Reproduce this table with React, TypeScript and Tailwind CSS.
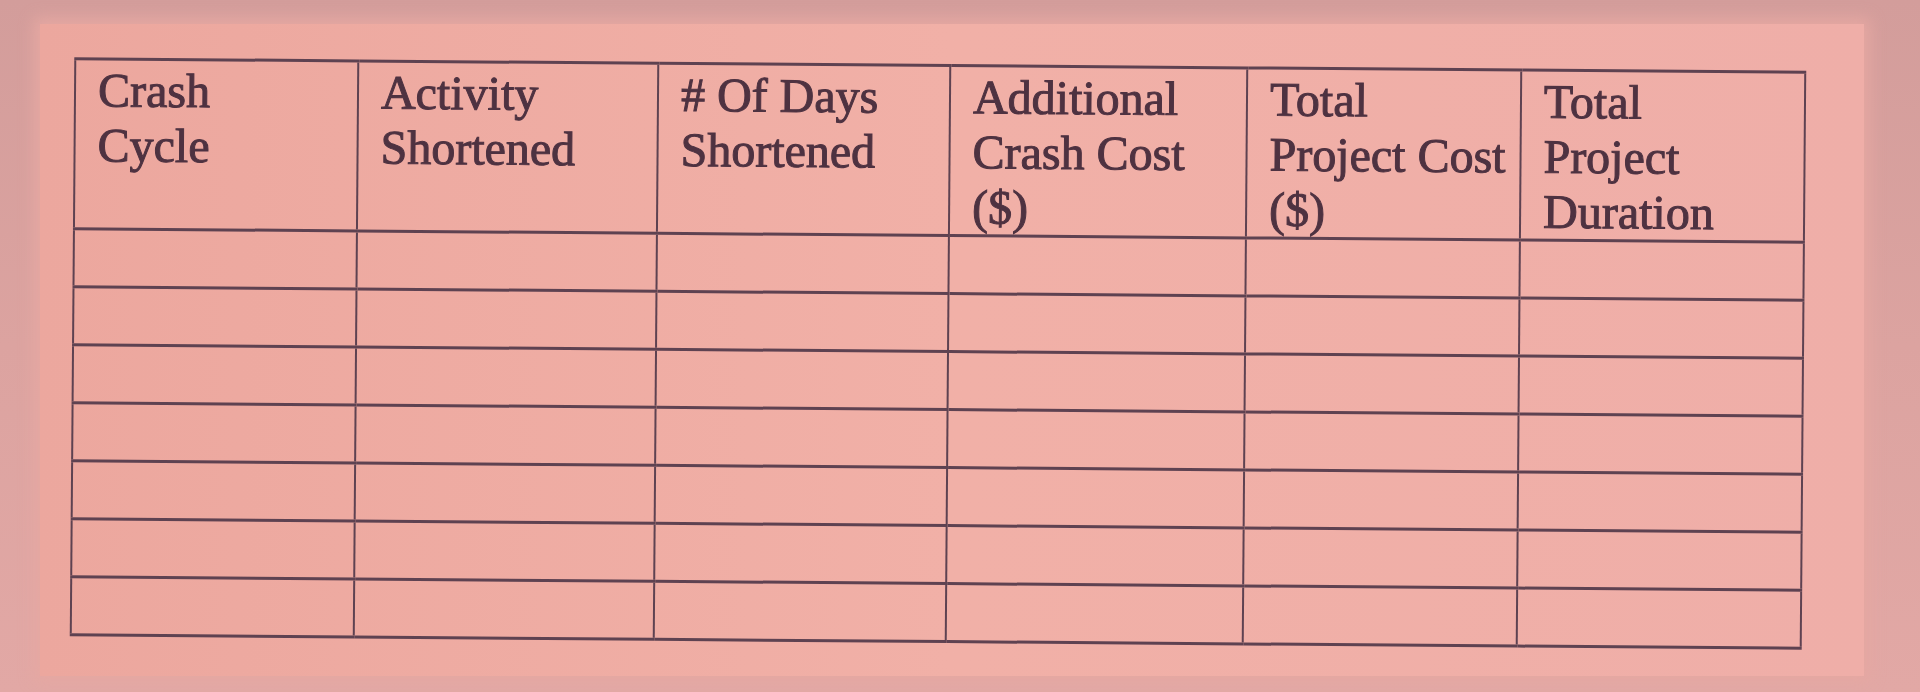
import React from "react";

const headers: string[][] = [
  ["Crash", "Cycle"],
  ["Activity", "Shortened"],
  ["# Of Days", "Shortened"],
  ["Additional", "Crash Cost", "($)"],
  ["Total", "Project Cost", "($)"],
  ["Total", "Project", "Duration"],
];

const widths = ["w-[283px]", "w-[300px]", "w-[292px]", "w-[297px]", "w-[274px]", "w-[284px]"];

export default function App() {
  const rows = Array.from({ length: 7 });
  return (
    <div className="w-full h-[692px] bg-gradient-to-b from-[#d39d9b] via-[#dca3a0] to-[#e2a8a5] pt-[24px] pl-[40px] overflow-hidden">
      <div className="w-[1824px] h-[652px] bg-gradient-to-r from-[#eca79e] via-[#f1b0a7] to-[#efaea8] shadow-[0_0_14px_6px_#e6a8a2]  pt-[40px] pl-[32px]">
        <table
          className="table-fixed border-collapse rotate-[0.45deg] text-[#4e3241] [-webkit-text-stroke:1px_#4e3241]"
          style={{ fontFamily: '"Liberation Serif", "Times New Roman", serif' }}
        >
          <colgroup>
            {widths.map((w, i) => (
              <col key={i} className={w} />
            ))}
          </colgroup>
          <thead>
            <tr className="h-[166px]">
              {headers.map((lines, i) => (
                <th
                  key={i}
                  className="align-top text-left font-normal text-[48px] leading-[55px] pl-[22px] pt-[2px] border-y-[3px] border-x-2 border-[#5e4251]"
                >
                  {lines.map((l, j) => (
                    <div key={j} className="whitespace-nowrap">
                      {l}
                    </div>
                  ))}
                </th>
              ))}
            </tr>
          </thead>
          <tbody>
            {rows.map((_, r) => (
              <tr key={r} className="h-[58px]">
                {headers.map((_, c) => (
                  <td key={c} className="border-y-[3px] border-x-2 border-[#5e4251]" />
                ))}
              </tr>
            ))}
          </tbody>
        </table>
      </div>
    </div>
  );
}
